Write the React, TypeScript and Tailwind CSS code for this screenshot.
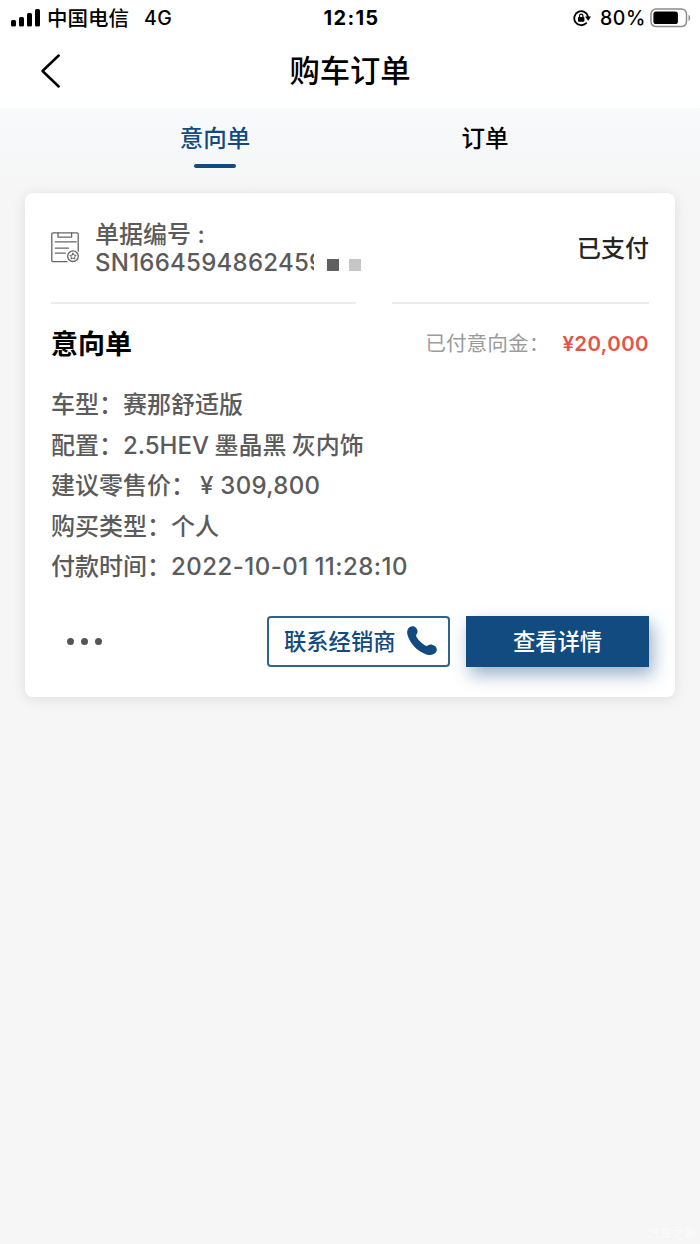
import { clsx } from "clsx";

const DETAILS = [
  { label: "车型：", value: "赛那舒适版" },
  { label: "配置：", value: "2.5HEV 墨晶黑 灰内饰", className: "[word-spacing:-1px]" },
  { label: "建议零售价：", value: "¥ 309,800", className: "ml-[5px] tracking-[0.3px]" },
  { label: "购买类型：", value: "个人" },
  { label: "付款时间：", value: "2022-10-01 11:28:10", className: "tracking-[0.46px] [word-spacing:-1px]" },
];

const TABS = ["意向单", "订单"];

function SignalIcon() {
  return (
    <svg width="30" height="20" viewBox="0 0 30 20" fill="#000">
      <rect x="0" y="12" width="5" height="6.5" rx="1.5" />
      <rect x="8" y="9" width="5" height="9.5" rx="1.5" />
      <rect x="16" y="5" width="5" height="13.5" rx="1.5" />
      <rect x="24" y="1" width="5" height="17.5" rx="1.5" />
    </svg>
  );
}

function RotationLockIcon() {
  return (
    <svg width="18" height="18" viewBox="0 0 18 18" fill="none" stroke="#000">
      <path d="M13.2 14.2A7 7 0 1 1 15 7.4" strokeWidth="1.8" strokeLinecap="round" />
      <path d="M12 7.6h6l-2.8 4.2z" fill="#000" stroke="none" />
      <rect x="5" y="8" width="6.4" height="4.8" rx=".8" fill="#000" stroke="none" />
      <path d="M6.5 8.4V6.8a1.7 1.7 0 0 1 3.4 0v1.6" strokeWidth="1.2" />
    </svg>
  );
}

function BatteryIcon() {
  return (
    <svg width="42" height="20" viewBox="0 0 42 20">
      <rect x="1" y="1" width="35.5" height="17.6" rx="5" fill="none" stroke="#8c8c8c" strokeWidth="1.5" />
      <rect x="3.4" y="3.5" width="24.5" height="12.6" rx="2.6" fill="#000" />
      <path d="M38.5 6.8c2.2.8 2.2 5.4 0 6.2z" fill="#8c8c8c" />
    </svg>
  );
}

function ReceiptIcon() {
  return (
    <svg width="28" height="31" viewBox="0 0 28 31" fill="none" stroke="#666" strokeWidth="1.3" strokeLinecap="round" strokeLinejoin="round">
      <path d="M16 29.7H2a1.2 1.2 0 0 1-1.2-1.2V2A1.2 1.2 0 0 1 2 .8h24A1.2 1.2 0 0 1 27.2 2v17" />
      <path d="M7 1v4.2h13.6V1" />
      <path d="M4.3 9.8h21M4.3 16.2h13.2M4.3 21.2h10" />
      <circle cx="22" cy="24.2" r="5.3" />
      <path d="m22 21.2 1 1.9 2.1.3-1.5 1.5.3 2.1-1.9-1-1.9 1 .3-2.1-1.5-1.5 2.1-.3z" strokeWidth="1" />
    </svg>
  );
}

function PhoneIcon() {
  return (
    <svg width="30" height="30" viewBox="0 0 30 30" fill="#114b80">
      <path d="M2.4 1.3C4.5-.2 7.4-.2 9.2 2c1.700 2.100 1.800 4.400.5 6.100-.8 1.100-.7 2 0 3.200 2.200 3.400 4.900 6.100 8.500 8.200 1.200.7 2 .6 3-.2 1.900-1.400 4.500-1 6.700.8 2.300 1.900 2.500 4.600.8 6.500-2.100 2.400-5.500 3-9.300 1.800C10.200 25.400 3 17.300.6 9.200-.3 6 .3 2.900 2.400 1.300z" />
    </svg>
  );
}

function StatusBar() {
  return (
    <div className="flex h-9 items-center bg-white text-[19.5px] font-medium leading-9 text-black">
      <div className="flex flex-1 items-center pl-[11px]">
        <SignalIcon />
        <span className="ml-[6px] pt-px text-[20.5px]">中国电信</span>
        <span className="ml-[15px] tracking-[0.5px]">4G</span>
      </div>
      <span className="text-[20px] font-bold tracking-[1.3px]">12:15</span>
      <div className="flex flex-1 items-center justify-end pr-2">
        <RotationLockIcon />
        <span className="ml-[9px] mr-[4px] tracking-[0.6px]">80%</span>
        <BatteryIcon />
      </div>
    </div>
  );
}

function Header() {
  return (
    <div className="flex h-[72px] items-start justify-between bg-white px-10 pt-[17px]">
      <svg width="22" height="36" viewBox="0 0 22 36" fill="none" stroke="#000" strokeWidth="2.5" strokeLinecap="round" strokeLinejoin="round">
        <path d="M18.7 2.5 2.5 18l16.2 15.5" />
      </svg>
      <h1 className="text-[30.3px] font-medium leading-9 text-black">购车订单</h1>
      <div className="w-[22px]" />
    </div>
  );
}

function Tabs() {
  return (
    <div className="flex h-[85px] bg-linear-to-b from-[#f7f9fb] to-[#f6f6f6] px-20">
      {TABS.map((tab, i) => (
        <div key={tab} className="flex flex-1 flex-col items-center">
          <span
            className={clsx(
              "mt-[13px] text-[23.5px] font-medium leading-9",
              i === 0 ? "text-[#114b80]" : "text-black"
            )}
          >
            {tab}
          </span>
          {i === 0 && <span className="mt-[7px] h-1 w-[42px] rounded-full bg-[#114b80]" />}
        </div>
      ))}
    </div>
  );
}

function OrderCard() {
  return (
    <div className="mx-[25px] h-[504px] rounded-lg bg-white px-[26px] shadow-[0_2px_14px_rgba(0,0,0,0.1)]">
      <div className="flex h-[109px] items-center">
        <ReceiptIcon />
        <div className="ml-4 flex-1 pt-[2px] text-2xl font-medium leading-7 text-[#5b5b5b]">
          <p>单据编号 :</p>
          <div className="flex items-center">
            <span className="w-[219px] overflow-hidden whitespace-nowrap tracking-[0.25px]">SN1664594862459</span>
            <span className="ml-[13px] mt-1 size-3 bg-[#606060]" />
            <span className="ml-[10px] mt-1 size-3 bg-[#c6c6c6]" />
          </div>
        </div>
        <span className="pt-[2px] text-2xl font-medium text-[#252525]">已支付</span>
      </div>
      <div className="flex gap-9">
        <div className="h-[2px] w-[305px] bg-[#ececec]" />
        <div className="h-[2px] flex-1 bg-[#ececec]" />
      </div>
      <div className="flex h-[80px] items-center">
        <h2 className="flex-1 pt-[2px] text-[27px] font-bold text-black">意向单</h2>
        <span className="text-[20.7px] text-[#9b9b9b]">已付意向金：</span>
        <span className="ml-[13px] text-[20.5px] font-semibold tracking-[0.4px] text-[#e25549]">¥20,000</span>
      </div>
      <div className="pt-px text-2xl font-medium leading-[40.5px] text-[#5b5b5b]">
        {DETAILS.map((item) => (
          <div key={item.label} className="flex">
            <span>{item.label}</span>
            <span className={item.className}>{item.value}</span>
          </div>
        ))}
      </div>
      <div className="mt-7 flex items-center">
        <div className="ml-4 flex flex-1 gap-[7px]">
          <span className="size-[7px] rounded-full bg-[#555]" />
          <span className="size-[7px] rounded-full bg-[#555]" />
          <span className="size-[7px] rounded-full bg-[#555]" />
        </div>
        <button className="flex h-[51px] w-[183px] items-center rounded-[4px] border-2 border-[#2f648f] pl-[15px] text-[22.3px] font-medium text-[#114b80]">
          <span className="pt-px">联系经销商</span>
          <span className="ml-[11px]">
            <PhoneIcon />
          </span>
        </button>
        <button className="ml-4 h-[51px] w-[183px] bg-[#114b80] pt-px text-[22.3px] font-medium text-white shadow-[4px_8px_16px_rgba(17,75,128,0.42)]">
          查看详情
        </button>
      </div>
    </div>
  );
}

export default function App() {
  return (
    <div className="flex h-[1244px] w-[700px] flex-col overflow-hidden bg-[#f6f6f6] font-['Inter','Noto_Sans_CJK_SC',sans-serif]">
      <StatusBar />
      <Header />
      <Tabs />
      <OrderCard />
      <span className="mr-1 mt-auto self-end text-[12px] leading-5 text-[#fbfbfb]">汽车之家</span>
    </div>
  );
}
